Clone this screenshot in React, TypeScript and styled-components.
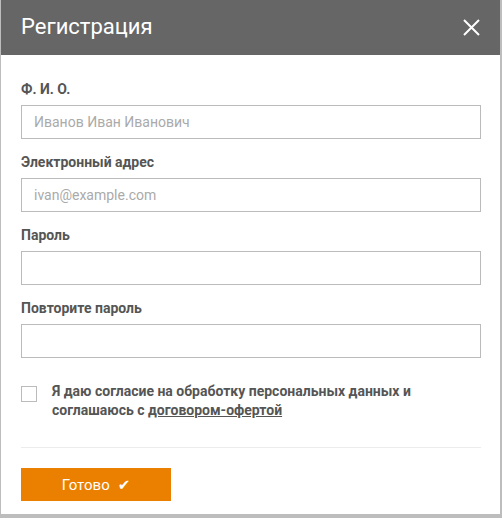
import React from 'react';
import styled, { createGlobalStyle } from 'styled-components';

const GlobalStyle = createGlobalStyle`
  html, body {
    margin: 0;
    padding: 0;
    background: #bdbdbd;
    font-family: Roboto, "Liberation Sans", Arial, sans-serif;
  }
  * {
    box-sizing: border-box;
  }
`;

const Backdrop = styled.div`
  width: 502px;
  height: 518px;
  padding: 0 2px 4px 1px;
  display: flex;
`;

const Modal = styled.div`
  flex: 1;
  background: #fff;
  display: flex;
  flex-direction: column;
`;

const Header = styled.div`
  height: 55px;
  background: #666666;
  display: flex;
  align-items: center;
  justify-content: space-between;
  padding: 0 19px 0 20px;
`;

const Title = styled.h2`
  margin: 0;
  font-size: 22px;
  font-weight: 400;
  color: #fff;
  padding-bottom: 2px;
`;

const CloseButton = styled.button`
  width: 20px;
  height: 20px;
  padding: 0;
  border: 0;
  background: none;
  cursor: pointer;
  display: flex;
  align-items: center;
  justify-content: center;
`;

const Body = styled.form`
  padding: 26px 19px 0 20px;
  display: flex;
  flex-direction: column;
`;

const Field = styled.div`
  display: flex;
  flex-direction: column;
  margin-bottom: 15px;
`;

const Label = styled.label`
  font-size: 14px;
  line-height: 16px;
  font-weight: 700;
  color: #555;
  margin-bottom: 8px;
`;

const Input = styled.input`
  height: 34px;
  width: 100%;
  border: 1px solid #bbb;
  padding: 0 12px;
  font-family: inherit;
  font-size: 14px;
  color: #333;
  outline: none;
  &::placeholder {
    color: #aaa;
  }
`;

const Consent = styled.div`
  display: flex;
  align-items: flex-start;
  gap: 15px;
  margin-top: 12px;
  padding-bottom: 27px;
  border-bottom: 1px solid #ececec;
`;

const Checkbox = styled.span`
  flex: none;
  width: 16px;
  height: 16px;
  margin-top: 1px;
  border: 1px solid #bbb;
  background: #fff;
`;

const ConsentText = styled.p`
  margin: -3px 0 0;
  font-size: 14px;
  line-height: 19px;
  font-weight: 700;
  color: #555;
`;

const Link = styled.a`
  color: #555;
  text-decoration: underline;
`;

const Footer = styled.div`
  padding: 20px 0 0;
`;

const SubmitButton = styled.button`
  width: 150px;
  height: 33px;
  border: 0;
  background: #eb8000;
  color: #fff;
  font-family: inherit;
  font-size: 15px;
  font-weight: 400;
  cursor: pointer;
  display: flex;
  align-items: center;
  justify-content: center;
  gap: 8px;
`;

const Check = styled.span`
  font-family: "DejaVu Sans", sans-serif;
  font-size: 15px;
`;

const fields = [
  { label: 'Ф. И. О.', placeholder: 'Иванов Иван Иванович', type: 'text' },
  { label: 'Электронный адрес', placeholder: 'ivan@example.com', type: 'email' },
  { label: 'Пароль', placeholder: '', type: 'password' },
  { label: 'Повторите пароль', placeholder: '', type: 'password' },
];

const App = () => {
  return (
    <>
      <GlobalStyle />
      <Backdrop>
        <Modal>
          <Header>
            <Title>Регистрация</Title>
            <CloseButton type="button" aria-label="Закрыть">
              <svg width="17" height="17" viewBox="0 0 17 17">
                <path d="M1 1L16 16M16 1L1 16" stroke="#fff" strokeWidth="2" />
              </svg>
            </CloseButton>
          </Header>
          <Body onSubmit={(e) => e.preventDefault()}>
            {fields.map((f) => (
              <Field key={f.label}>
                <Label>{f.label}</Label>
                <Input type={f.type} placeholder={f.placeholder} />
              </Field>
            ))}
            <Consent>
              <Checkbox />
              <ConsentText>
                Я даю согласие на обработку персональных данных и соглашаюсь с{' '}
                <Link href="#">договором-офертой</Link>
              </ConsentText>
            </Consent>
            <Footer>
              <SubmitButton type="submit">
                Готово
                <Check>✔</Check>
              </SubmitButton>
            </Footer>
          </Body>
        </Modal>
      </Backdrop>
    </>
  );
};

export default App;
